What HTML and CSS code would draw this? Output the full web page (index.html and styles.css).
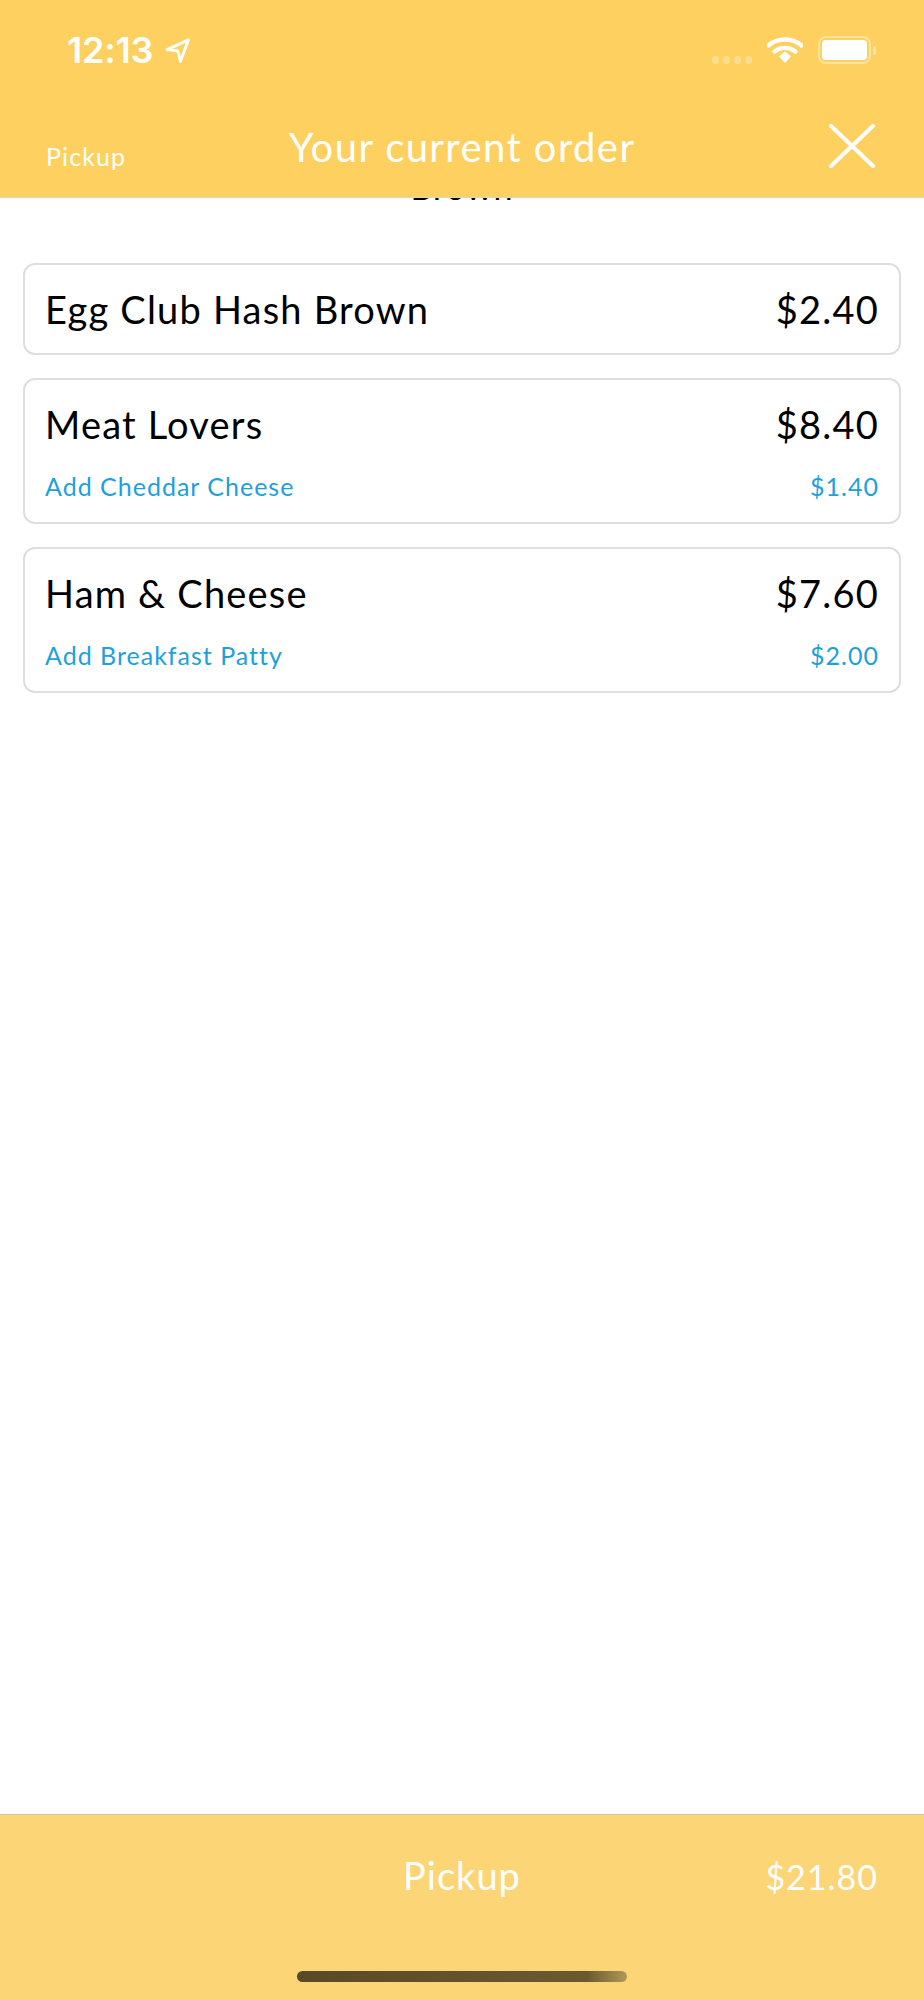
FILE: index.html
```html
<!DOCTYPE html>
<html lang="en">
<head>
<meta charset="utf-8">
<title>Your current order</title>
<link rel="stylesheet" href="styles.css">
</head>
<body>
<div class="screen">
  <header class="header">
    <div class="status">
      <div class="status-left">
        <span class="time">12:13</span>
        <svg class="loc" viewBox="0 0 24 24"><path d="M22.5 1.800 2 11.200l10.400 1.300 2.400 10z" fill="none" stroke="#fff" stroke-width="2.800" stroke-linejoin="round"/></svg>
      </div>
      <div class="status-right">
        <div class="dots"><i></i><i></i><i></i><i></i></div>
        <svg class="wifi" viewBox="0 0 36 28"><path d="M1.500 9.500C10.800 1.500 25.200 1.500 34.500 9.500" fill="none" stroke="#fff" stroke-width="4.400" stroke-linecap="round"/><path d="M7.500 15.700C13.500 10.500 22.500 10.500 28.500 15.700" fill="none" stroke="#fff" stroke-width="4.200" stroke-linecap="round"/><path d="M12.500 20.500 18 15.800 23.500 20.500 18 26.500z" fill="#fff" stroke="#fff" stroke-linejoin="round"/></svg>
        <div class="battery"><span class="battery-fill"></span></div>
        <span class="battery-nub"></span>
      </div>
    </div>
    <div class="nav">
      <span class="nav-side">Pickup</span>
      <span class="nav-title">Your current order</span>
      <svg class="close" viewBox="0 0 46 44"><path d="M2 2 44 42M44 2 2 42" stroke="#fff" stroke-width="4" stroke-linecap="round" fill="none"/></svg>
    </div>
  </header>
  <main class="main">
    <div class="peek"><span class="peek-text">Brown</span></div>
    <ul class="items">
      <li class="card">
        <div class="row"><span>Egg Club Hash Brown</span><span>$2.40</span></div>
      </li>
      <li class="card">
        <div class="row"><span>Meat Lovers</span><span>$8.40</span></div>
        <div class="row sub"><span>Add Cheddar Cheese</span><span>$1.40</span></div>
      </li>
      <li class="card">
        <div class="row"><span>Ham &amp; Cheese</span><span>$7.60</span></div>
        <div class="row sub"><span>Add Breakfast Patty</span><span>$2.00</span></div>
      </li>
    </ul>
  </main>
  <footer class="footer">
    <div class="footer-row">
      <span></span>
      <span class="footer-label">Pickup</span>
      <span class="footer-total">$21.80</span>
    </div>
    <div class="home"></div>
  </footer>
</div>
</body>
</html>
```
FILE: styles.css
```css
* { box-sizing: border-box; }
html, body { margin: 0; padding: 0; background: #fff; }
.screen {
  width: 924px;
  height: 2000px;
  display: flex;
  flex-direction: column;
  font-family: "Lato", "Noto Sans", sans-serif;
  overflow: hidden;
}
.header {
  height: 198px;
  background: #fdd05f;
  border-bottom: 1px solid #d9d4c4;
  color: #fff;
  display: flex;
  flex-direction: column;
  flex: none;
}
.status {
  height: 100px;
  padding: 32px 48px 0 67px;
  display: flex;
  justify-content: space-between;
  align-items: flex-start;
}
.status-left { display: flex; align-items: center; gap: 12px; height: 36px; }
.time { font-family: "Inter", sans-serif; font-weight: 600; font-size: 36px; line-height: 36px; letter-spacing: -0.2px; }
.loc { width: 25px; height: 25px; }
.status-right { display: flex; align-items: flex-start; }
.dots { display: flex; gap: 3.500px; margin: 24px 15px 0 0; }
.dots i { width: 7.500px; height: 7.500px; border-radius: 50%; background: rgba(255,255,255,.3); }
.wifi { width: 36px; height: 28px; margin: 4px 15px 0 0; }
.battery {
  width: 53px; height: 28px; margin-top: 4px;
  border: 2px solid rgba(255,255,255,.4);
  border-radius: 8px;
  padding: 2px;
  display: flex;
}
.battery-fill { flex: 1; background: #fff; border-radius: 4px; }
.battery-nub { width: 3px; height: 9px; margin: 13.500px 0 0 2px; background: rgba(255,255,255,.45); border-radius: 0 3px 3px 0; }
.nav {
  flex: 1;
  padding: 0 46px 10px;
  display: grid;
  grid-template-columns: 1fr auto 1fr;
  align-items: center;
}
.nav-side { font-size: 25px; letter-spacing: 1.1px; margin-top: 24px; }
.nav-title { font-size: 40px; letter-spacing: 1.4px; margin-top: 6px; }
.close { width: 46px; height: 44px; margin: 4px 3px 0 0; justify-self: end; }
.main { flex: 1; display: flex; flex-direction: column; }
.peek { height: 65px; overflow: hidden; text-align: center; flex: none; }
.peek-text { display: block; font-size: 34px; line-height: 34px; margin-top: -28px; color: #000; letter-spacing: 1px; }
.items { list-style: none; margin: 0; padding: 0 23px; display: flex; flex-direction: column; gap: 23px; }
.card {
  border: 2px solid #dedede;
  border-radius: 12px;
  padding: 20px;
  background: #fff;
}
.row {
  display: flex;
  justify-content: space-between;
  align-items: baseline;
  font-size: 38px;
  line-height: 48px;
  letter-spacing: 1.200px;
  color: #000;
}
.sub {
  font-size: 25px;
  line-height: 32px;
  letter-spacing: 1px;
  color: #1ea0dc;
  margin-top: 22px;
}
.footer {
  height: 186px;
  flex: none;
  background: #fbd576;
  border-top: 1px solid #cfc6a8;
  display: flex;
  flex-direction: column;
  align-items: center;
  color: #fff;
}
.footer-row {
  width: 100%;
  height: 156px;
  padding: 36px 46px 0;
  display: grid;
  grid-template-columns: 1fr auto 1fr;
  align-items: baseline;
}
.footer-label { font-size: 38px; letter-spacing: 1px; line-height: 48px; }
.footer-total { font-size: 34px; letter-spacing: 1px; line-height: 48px; justify-self: end; }
.home {
  width: 330px;
  height: 11px;
  border-radius: 6px;
  background: linear-gradient(90deg, #584a26 0%, #6a5a30 88%, #b09a55 100%);
}
```
